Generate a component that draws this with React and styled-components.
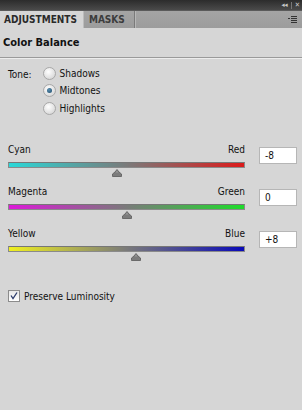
import React from "react"
import styled, { createGlobalStyle } from "styled-components"

const Global = createGlobalStyle`
  html, body {
    margin: 0;
    padding: 0;
    background: #d6d6d6;
  }
  body {
    font-family: "DejaVu Sans Condensed", "Liberation Sans", sans-serif;
    font-size: 10px;
    color: #111;
  }
`

const Panel = styled.div`
  width: 302px;
  height: 410px;
  background: #d6d6d6;
  display: flex;
  flex-direction: column;
  overflow: hidden;
`

const TitleBar = styled.div`
  height: 10px;
  background: linear-gradient(#2c2c2c, #4a4a4a);
  display: flex;
  justify-content: flex-end;
  align-items: center;
  gap: 3px;
  padding-right: 2px;
  color: #c8c8c8;
  font-size: 7px;
  font-weight: bold;
  line-height: 10px;
`

const Sep = styled.span`
  width: 1px;
  height: 7px;
  background: #777;
`

const TabBar = styled.div`
  height: 17px;
  background: linear-gradient(#a4a4a4, #9c9c9c);
  border-top: 1px solid #5a5a5a;
  display: flex;
  align-items: stretch;
`

const Tab = styled.div`
  padding: ${(p) => (p.active ? "0 6px 0 4px" : "0 9px 0 5px")};
  display: flex;
  align-items: center;
  font-family: "DejaVu Sans Condensed", sans-serif;
  font-size: 10px;
  font-weight: bold;
  color: ${(p) => (p.active ? "#2a2a2a" : "#3c3c3c")};
  background: ${(p) => (p.active ? "#d6d6d6" : "transparent")};
  border-right: 1px solid ${(p) => (p.active ? "#bcbcbc" : "#7a7a7a")};
  box-shadow: ${(p) => (p.active ? "none" : "1px 0 0 #b8b8b8")};
`

const Spacer = styled.div`
  flex: 1;
`

const MenuIcon = styled.div`
  display: flex;
  align-items: center;
  padding-right: 5px;
`

const Header = styled.div`
  height: 29px;
  padding-left: 3px;
  display: flex;
  align-items: center;
  font-family: "DejaVu Sans Condensed", sans-serif;
  font-weight: bold;
  font-size: 11px;
  color: #111;
  border-bottom: 1px solid #9a9a9a;
  box-shadow: 0 1px 0 #ececec;
`

const ToneRow = styled.div`
  display: flex;
  padding: 8px 0 0 8px;
  gap: 11px;
`

const ToneLabel = styled.div`
  padding-top: 3px;
  font-size: 10px;
`

const Radios = styled.div`
  display: flex;
  flex-direction: column;
  gap: 3.5px;
`

const RadioRow = styled.label`
  display: flex;
  align-items: center;
  gap: 4px;
  height: 14px;
  font-size: 10px;
`

const RadioDot = styled.span`
  width: 11px;
  height: 11px;
  border-radius: 50%;
  border: 1px solid #a8a8a8;
  background: radial-gradient(circle at 40% 35%, #ffffff, #dcdcdc 70%, #c8c8c8);
  display: flex;
  align-items: center;
  justify-content: center;
  &::after {
    content: "";
    width: 5px;
    height: 5px;
    border-radius: 50%;
    background: radial-gradient(circle at 40% 35%, #5a8fb0, #1d4a6a);
    display: ${(p) => (p.checked ? "block" : "none")};
  }
`

const Sliders = styled.div`
  display: flex;
  flex-direction: column;
  gap: 8px;
  padding: 28px 0 0 8px;
`

const SliderRow = styled.div`
  display: flex;
  align-items: flex-start;
  gap: 14px;
`

const SliderCol = styled.div`
  width: 237px;
  display: flex;
  flex-direction: column;
`

const Labels = styled.div`
  display: flex;
  justify-content: space-between;
  font-size: 10px;
  height: 14px;
  line-height: 14px;
`

const Track = styled.div`
  position: relative;
  margin-top: 5px;
  height: 4px;
  border: 1px solid #8a8a8a;
  border-top-color: #777;
  background: ${(p) => `linear-gradient(to right, ${p.from}, #7a7a7a 50%, ${p.to})`};
`

const ThumbHolder = styled.div`
  height: 9px;
  position: relative;
`

const Thumb = styled.svg`
  position: absolute;
  top: 1px;
  margin-left: -5px;
`

const NumBox = styled.div`
  margin-top: 4px;
  width: 38px;
  height: 17px;
  background: #fff;
  border: 1px solid #b6b6b6;
  box-sizing: border-box;
  padding-left: 5px;
  display: flex;
  align-items: center;
  font-size: 10px;
`

const CheckRow = styled.label`
  display: flex;
  align-items: center;
  gap: 4px;
  padding: 29px 0 0 8px;
  font-size: 10px;
`

const CheckBox = styled.span`
  width: 10px;
  height: 10px;
  border: 1px solid #8c8c8c;
  background: linear-gradient(#e8e8e8, #ffffff);
  display: flex;
  align-items: center;
  justify-content: center;
`

const sliders = [
  { left: "Cyan", right: "Red", from: "#2ad8d8", to: "#dc1a1a", pos: 46, value: "-8" },
  { left: "Magenta", right: "Green", from: "#dc1ad8", to: "#1edc2a", pos: 50, value: "0" },
  { left: "Yellow", right: "Blue", from: "#f0f020", to: "#0a0ab8", pos: 54, value: "+8" },
]

function Slider({ left, right, from, to, pos, value }) {
  return (
    <SliderRow>
      <SliderCol>
        <Labels>
          <span>{left}</span>
          <span>{right}</span>
        </Labels>
        <Track from={from} to={to} />
        <ThumbHolder>
          <Thumb width="10" height="8" viewBox="0 0 10 8" style={{ left: `${pos}%` }}>
            <path d="M5 0.5 L7 3 L9.5 5 L9.5 7.5 L0.5 7.5 L0.5 5 L3 3 Z" fill="#7c7c7c" stroke="#5a5a5a" strokeWidth="0.8" />
            <path d="M5 1.5 L6.5 3.5 L3.5 3.5 Z" fill="#9a9a9a" />
          </Thumb>
        </ThumbHolder>
      </SliderCol>
      <NumBox>{value}</NumBox>
    </SliderRow>
  )
}

export default function App() {
  return (
    <>
      <Global />
      <Panel>
        <TitleBar>
          <span>◂◂</span>
          <Sep />
          <span>✕</span>
        </TitleBar>
        <TabBar>
          <Tab active>ADJUSTMENTS</Tab>
          <Tab>MASKS</Tab>
          <Spacer />
          <MenuIcon>
            <svg width="9" height="7" viewBox="0 0 9 7">
              <rect x="0" y="2" width="2" height="1" fill="#333" />
              <rect x="3" y="0" width="6" height="1" fill="#333" />
              <rect x="3" y="2" width="6" height="1" fill="#333" />
              <rect x="3" y="4" width="6" height="1" fill="#333" />
              <rect x="3" y="6" width="6" height="1" fill="#333" />
            </svg>
          </MenuIcon>
        </TabBar>
        <Header>Color Balance</Header>
        <ToneRow>
          <ToneLabel>Tone:</ToneLabel>
          <Radios>
            <RadioRow>
              <RadioDot />
              Shadows
            </RadioRow>
            <RadioRow>
              <RadioDot checked />
              Midtones
            </RadioRow>
            <RadioRow>
              <RadioDot />
              Highlights
            </RadioRow>
          </Radios>
        </ToneRow>
        <Sliders>
          {sliders.map((s) => (
            <Slider key={s.left} {...s} />
          ))}
        </Sliders>
        <CheckRow>
          <CheckBox>
            <svg width="8" height="8" viewBox="0 0 8 8">
              <path d="M1 3.5 L3 6.5 L7 0.5" fill="none" stroke="#2a3a6a" strokeWidth="1.3" />
            </svg>
          </CheckBox>
          Preserve Luminosity
        </CheckRow>
      </Panel>
    </>
  )
}
